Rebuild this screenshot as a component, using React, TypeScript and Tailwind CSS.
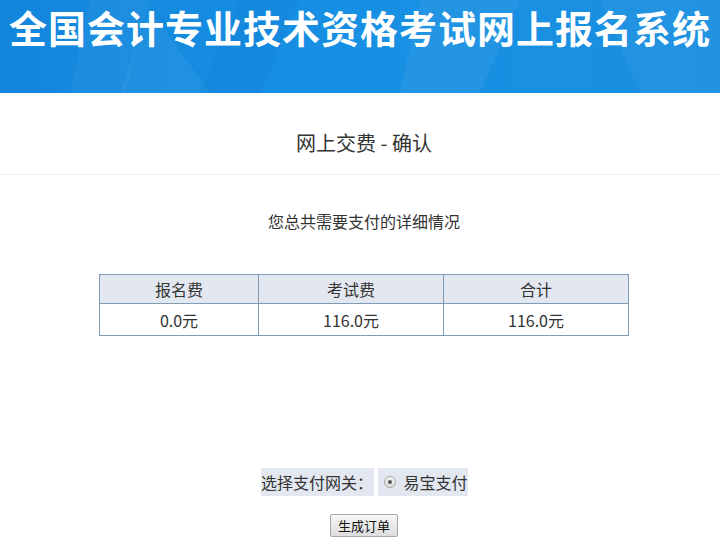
import React from 'react';

const cjk = { fontFamily: '"Microsoft YaHei", "Noto Sans CJK SC", "Liberation Sans", sans-serif' };

const Banner: React.FC = () => (
  <div className="relative h-[93px] overflow-hidden bg-gradient-to-r from-[#1386dc] via-[#1790e3] to-[#1a8fe0]">
    {/* light streaks in the banner background */}
    <svg className="absolute inset-0 h-full w-full" viewBox="0 0 720 93" preserveAspectRatio="none">
      <polygon points="90,0 150,0 125,93 70,93" fill="#ffffff" opacity="0.04" />
      <polygon points="150,10 210,93 120,93" fill="#ffffff" opacity="0.05" />
      <polygon points="240,0 300,0 260,93 200,93" fill="#0b6fc8" opacity="0.12" />
      <polygon points="420,0 520,0 480,93 400,93" fill="#ffffff" opacity="0.05" />
      <polygon points="600,0 720,0 720,93 640,93" fill="#ffffff" opacity="0.04" />
    </svg>
    <h1
      className="relative pt-[5px] text-center text-[38px] font-bold leading-[44px] tracking-[1px] text-white"
      style={cjk}
    >
      全国会计专业技术资格考试网上报名系统
    </h1>
  </div>
);

export default function App() {
  const fees = [
    { label: '报名费', value: '0.0元', w: 'w-[159px]' },
    { label: '考试费', value: '116.0元', w: 'w-[185px]' },
    { label: '合计', value: '116.0元', w: '' },
  ];

  return (
    <div className="min-h-[549px] bg-white text-[#333]" style={cjk}>
      <Banner />

      <div className="h-[82px] border-b border-[#eeeeee] pl-[8px] pt-[37px] text-center">
        <h2 className="text-[20px] leading-[26px] text-[#333]">网上交费 - 确认</h2>
      </div>

      <div className="pl-[8px]">
        <p className="mt-[35px] text-center text-[16px] leading-[22px] text-[#333]">
          您总共需要支付的详细情况
        </p>

        <table className="mx-auto mt-[42px] w-[530px] border-collapse border border-[#7f9bb6] text-[16px]">
          <thead>
            <tr className="h-[29px] bg-[#e3e8f0]">
              {fees.map(f => (
                <th key={f.label} className={`border border-[#7f9bb6] text-center font-normal ${f.w}`}>
                  {f.label}
                </th>
              ))}
            </tr>
          </thead>
          <tbody>
            <tr className="h-[32px]">
              {fees.map(f => (
                <td key={f.label} className="border border-[#7f9bb6] text-center">
                  {f.value}
                </td>
              ))}
            </tr>
          </tbody>
        </table>

        <div className="mt-[132px] flex justify-center gap-[4px] text-[16px]">
          <div className="flex h-[28px] w-[113px] items-center justify-center bg-[#e3e8f0]">选择支付网关：</div>
          <div className="flex h-[28px] w-[90px] items-center gap-[8px] bg-[#e3e8f0] pl-[6px]">
            <span className="flex h-[12px] w-[12px] items-center justify-center rounded-full border border-[#a6a6a6] bg-gradient-to-b from-[#f4f4f4] to-[#dcdcdc]">
              <span className="h-[4px] w-[4px] rounded-full bg-[#555]" />
            </span>
            易宝支付
          </div>
        </div>

        <div className="mt-[18px] flex justify-center">
          <button className="h-[23px] w-[68px] rounded-[2px] border border-[#a8a8a8] bg-gradient-to-b from-[#f6f6f6] to-[#dedede] text-[13px] leading-none text-[#111]">
            生成订单
          </button>
        </div>
      </div>
    </div>
  );
}
